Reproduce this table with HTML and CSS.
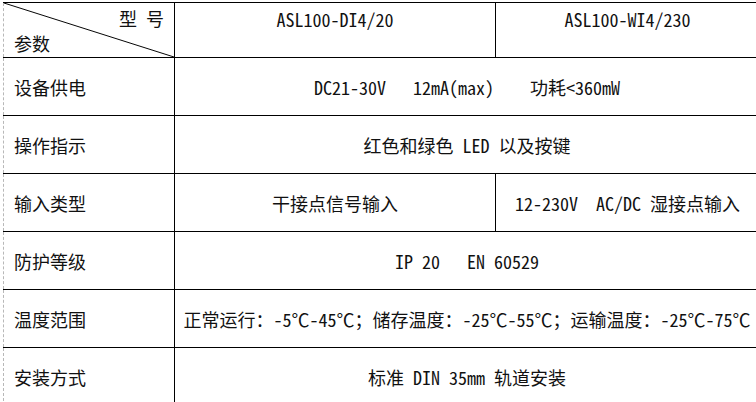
FILE: index.html
```html
<!DOCTYPE html>
<html lang="zh">
<head>
<meta charset="utf-8">
<link rel="stylesheet" href="styles.css">
<title>参数</title>
</head>
<body>
<table class="spec">
  <colgroup>
    <col class="c1"><col class="c2"><col class="c3">
  </colgroup>
  <tr class="head">
    <td class="corner">
      <svg class="diag" viewBox="0 0 171 55" preserveAspectRatio="none"><line x1="0" y1="0" x2="171" y2="55" stroke="#000" stroke-width="1"/></svg>
      <div class="model">型&nbsp;号</div>
      <div class="param">参数</div>
    </td>
    <td class="hcell">ASL100-DI4/20</td>
    <td class="hcell">ASL100-WI4/230</td>
  </tr>
  <tr>
    <td class="label">设备供电</td>
    <td class="val pre" colspan="2">DC21-30V   12mA(max)    功耗&lt;360mW</td>
  </tr>
  <tr>
    <td class="label">操作指示</td>
    <td class="val" colspan="2">红色和绿色 LED 以及按键</td>
  </tr>
  <tr>
    <td class="label">输入类型</td>
    <td class="val">干接点信号输入</td>
    <td class="val pre">12-230V  AC/DC 湿接点输入</td>
  </tr>
  <tr>
    <td class="label">防护等级</td>
    <td class="val pre" colspan="2">IP 20   EN 60529</td>
  </tr>
  <tr>
    <td class="label">温度范围</td>
    <td class="val tight" colspan="2">正常运行：-5℃-45℃；储存温度：-25℃-55℃；运输温度：-25℃-75℃</td>
  </tr>
  <tr>
    <td class="label">安装方式</td>
    <td class="val" colspan="2">标准 DIN 35mm 轨道安装</td>
  </tr>
</table>
</body>
</html>
```
FILE: styles.css
```css
html, body {
  margin: 0;
  padding: 0;
  background: #fff;
  overflow: hidden;
}
body {
  font-family: "Noto Sans Mono CJK SC", "Noto Sans CJK SC", sans-serif;
  font-size: 18px;
  color: #111;
  line-height: 20px;
}
.spec {
  border-collapse: collapse;
  table-layout: fixed;
  width: 756px;
  margin: 2px 0 0 3px;
}
.c1 { width: 171px; }
.c2 { width: 321px; }
.c3 { width: 264px; }
.spec td {
  border: 1px solid #000;
  height: 58px;
  padding: 0 10px;
  vertical-align: middle;
  box-sizing: border-box;
}
.spec tr td:first-child {
  border-left: 1px dashed #b8b8b8;
}
.spec tr:last-child td {
  border-bottom: none;
}
.head td {
  height: 55px;
  vertical-align: top;
}
.corner {
  position: relative;
}
.diag {
  position: absolute;
  left: 0;
  top: 0;
  width: 100%;
  height: 100%;
}
.model {
  text-align: right;
  padding-top: 5px;
}
.param {
  padding-top: 5px;
}
.hcell {
  text-align: center;
  padding-top: 6px !important;
}
.label {
  text-align: left;
}
.val {
  text-align: center;
}
.pre {
  white-space: pre;
}
.tight {
  white-space: nowrap;
  padding: 0 4px !important;
}
```
